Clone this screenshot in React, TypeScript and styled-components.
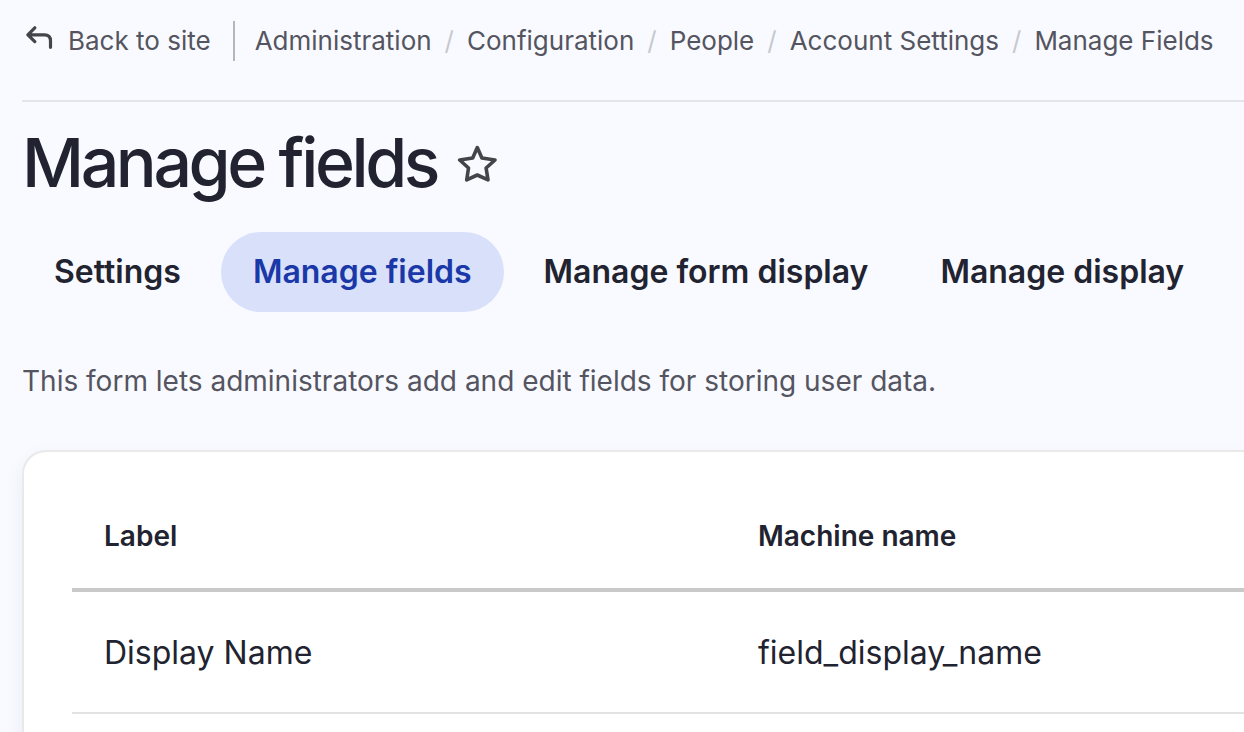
import React from "react";
import styled, { createGlobalStyle } from "styled-components";

const Global = createGlobalStyle`
  * { box-sizing: border-box; }
  body {
    margin: 0;
    background: #f9faff;
    color: #222330;
    font-family: Inter, "Liberation Sans", sans-serif;
    overflow-x: hidden;
  }
`;

const Page = styled.div`
  padding-left: 22px;
`;

const TopBar = styled.header`
  display: flex;
  align-items: center;
  padding: 21px 0 39px;
  border-bottom: 2px solid #e4e5ea;
  font-size: 26px;
  line-height: 40px;
  white-space: nowrap;
`;

const BackLink = styled.a`
  display: flex;
  align-items: flex-start;
  gap: 14px;
  padding: 0 22px 0 4px;
  border-right: 2px solid #b5b6bd;
  color: #545560;
  text-decoration: none;
`;

const BackIcon = styled.svg`
  margin-top: 4px;
  flex: none;
`;

const Crumbs = styled.ol`
  display: flex;
  margin: 0;
  padding: 0 0 0 20px;
  list-style: none;
`;

const Crumb = styled.li`
  & + &::before {
    content: "/";
    padding: 0 13px;
    color: #c8c9ce;
  }
`;

const CrumbLink = styled.a`
  color: #545560;
  text-decoration: none;
`;

const TitleRow = styled.div`
  display: flex;
  align-items: center;
  gap: 20px;
  padding-top: 18px;
`;

const Title = styled.h1`
  margin: 0;
  font-size: 68px;
  line-height: 84px;
  font-weight: 500;
  letter-spacing: -0.05em;
`;

const StarButton = styled.button`
  display: flex;
  padding: 0;
  border: 0;
  background: none;
`;

const Tabs = styled.nav`
  display: flex;
  gap: 8px;
  padding-top: 28px;
`;

const Tab = styled.a<{ $active?: boolean }>`
  padding: 0 32px;
  border-radius: 40px;
  background: ${(p) => (p.$active ? "#d8e0fa" : "transparent")};
  color: ${(p) => (p.$active ? "#1a38a8" : "#222330")};
  font-size: 32px;
  line-height: 80px;
  font-weight: 600;
  text-decoration: none;
  white-space: nowrap;
`;

const Help = styled.p`
  margin: 48px 0;
  color: #545560;
  font-size: 28px;
  line-height: 42px;
`;

const Panel = styled.section`
  padding: 32px 0 48px 48px;
  border: 2px solid #e9e9ea;
  border-right: 0;
  border-bottom: 0;
  border-radius: 24px 0 0 0;
  background: #fff;
  box-shadow: 0 8px 20px rgba(34, 35, 80, 0.06);
`;

const FieldTable = styled.table`
  width: 100%;
  border-collapse: separate;
  border-spacing: 0;
  table-layout: fixed;
  color: #222330;
  text-align: left;
`;

const HeadCell = styled.th<{ $width?: string }>`
  width: ${(p) => p.$width ?? "auto"};
  padding: 0 32px;
  height: 108px;
  border-bottom: 4px solid #c9c9c9;
  font-size: 28px;
  font-weight: 600;
`;

const Cell = styled.td`
  padding: 0 32px;
  height: 122px;
  border-bottom: 2px solid #e2e2e3;
  font-size: 32px;
`;

const trail = ["Administration", "Configuration", "People", "Account Settings", "Manage Fields"];
const tabs = ["Settings", "Manage fields", "Manage form display", "Manage display"];

export default function App() {
  return (
    <Page>
      <Global />
      <TopBar>
        <BackLink href="#">
          <BackIcon width="28" height="26" viewBox="0 0 28 26" fill="none" stroke="#444548" strokeWidth="3.2" strokeLinecap="round" strokeLinejoin="round">
            <path d="M8.800 2.800 1.900 9.800l6.900 6.800M2 9.800h16.500q6 0 6 6v6.500" />
          </BackIcon>
          Back to site
        </BackLink>
        <Crumbs>
          {trail.map((t) => (
            <Crumb key={t}><CrumbLink href="#">{t}</CrumbLink></Crumb>
          ))}
        </Crumbs>
      </TopBar>
      <main>
        <TitleRow>
          <Title>Manage fields</Title>
          <StarButton type="button" aria-label="Add to shortcuts">
            <svg width="40" height="40" viewBox="0 0 40 40" fill="none" stroke="#444548" strokeWidth="3.6" strokeLinejoin="round">
              <path d="M20.300 5.600 24.900 16 38 18 29.100 26 31 37.900 20.300 33 9.700 37.900 11.500 26 2.700 18 15.700 16z" />
            </svg>
          </StarButton>
        </TitleRow>
        <Tabs>
          {tabs.map((t) => (
            <Tab key={t} href="#" $active={t === "Manage fields"}>{t}</Tab>
          ))}
        </Tabs>
        <Help>This form lets administrators add and edit fields for storing user data.</Help>
        <Panel>
          <FieldTable>
            <thead>
              <tr><HeadCell $width="55.8%">Label</HeadCell><HeadCell>Machine name</HeadCell></tr>
            </thead>
            <tbody>
              <tr><Cell>Display Name</Cell><Cell>field_display_name</Cell></tr>
            </tbody>
          </FieldTable>
        </Panel>
      </main>
    </Page>
  );
}
